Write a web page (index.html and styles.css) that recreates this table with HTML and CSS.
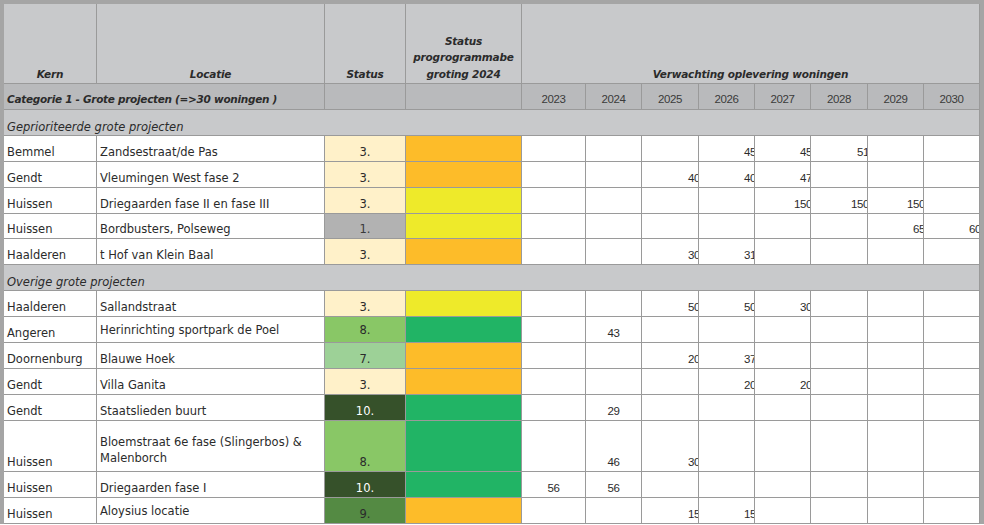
FILE: index.html
```html
<!DOCTYPE html>
<html lang="nl">
<head>
<meta charset="utf-8">
<title>Woningbouwprojecten</title>
<link rel="stylesheet" href="styles.css">
</head>
<body>
<div class="frame">
  <div class="sheet">
    <div class="row head">
      <div class="c hd">Kern</div>
      <div class="c hd">Locatie</div>
      <div class="c hd">Status</div>
      <div class="c hd">Status<br>progrogrammabe<br>groting 2024</div>
      <div class="c hd years-span">Verwachting oplevering woningen</div>
    </div>

    <div class="row cat">
      <div class="c cat-title">Categorie 1 - Grote projecten (=&gt;30 woningen )</div>
      <div class="c"></div>
      <div class="c"></div>
      <div class="c yr">2023</div>
      <div class="c yr">2024</div>
      <div class="c yr">2025</div>
      <div class="c yr">2026</div>
      <div class="c yr">2027</div>
      <div class="c yr">2028</div>
      <div class="c yr">2029</div>
      <div class="c yr">2030</div>
    </div>

    <div class="row group"><div class="c grp">Geprioriteerde grote projecten</div></div>

    <div class="row">
      <div class="c">Bemmel</div><div class="c">Zandsestraat/de Pas</div>
      <div class="c st s3">3.</div><div class="c pg orange"></div>
      <div class="c"></div><div class="c"></div><div class="c"></div>
      <div class="c n"><span>45</span></div><div class="c n"><span>45</span></div><div class="c n"><span>51</span></div>
      <div class="c"></div><div class="c"></div>
    </div>
    <div class="row">
      <div class="c">Gendt</div><div class="c">Vleumingen West fase 2</div>
      <div class="c st s3">3.</div><div class="c pg orange"></div>
      <div class="c"></div><div class="c"></div>
      <div class="c n"><span>40</span></div><div class="c n"><span>40</span></div><div class="c n"><span>47</span></div>
      <div class="c"></div><div class="c"></div><div class="c"></div>
    </div>
    <div class="row">
      <div class="c">Huissen</div><div class="c">Driegaarden fase II en fase III</div>
      <div class="c st s3">3.</div><div class="c pg yellow"></div>
      <div class="c"></div><div class="c"></div><div class="c"></div><div class="c"></div>
      <div class="c n"><span>150</span></div><div class="c n"><span>150</span></div><div class="c n"><span>150</span></div>
      <div class="c"></div>
    </div>
    <div class="row short">
      <div class="c">Huissen</div><div class="c">Bordbusters, Polseweg</div>
      <div class="c st s1">1.</div><div class="c pg yellow"></div>
      <div class="c"></div><div class="c"></div><div class="c"></div><div class="c"></div><div class="c"></div><div class="c"></div>
      <div class="c n"><span>65</span></div><div class="c n"><span>60</span></div>
    </div>
    <div class="row">
      <div class="c">Haalderen</div><div class="c">t Hof van Klein Baal</div>
      <div class="c st s3">3.</div><div class="c pg orange"></div>
      <div class="c"></div><div class="c"></div>
      <div class="c n"><span>30</span></div><div class="c n"><span>31</span></div>
      <div class="c"></div><div class="c"></div><div class="c"></div><div class="c"></div>
    </div>

    <div class="row group"><div class="c grp">Overige grote projecten</div></div>

    <div class="row">
      <div class="c">Haalderen</div><div class="c">Sallandstraat</div>
      <div class="c st s3">3.</div><div class="c pg yellow"></div>
      <div class="c"></div><div class="c"></div>
      <div class="c n"><span>50</span></div><div class="c n"><span>50</span></div><div class="c n"><span>30</span></div>
      <div class="c"></div><div class="c"></div><div class="c"></div>
    </div>
    <div class="row">
      <div class="c">Angeren</div><div class="c mid">Herinrichting sportpark de Poel</div>
      <div class="c st s8 mid">8.</div><div class="c pg green"></div>
      <div class="c"></div><div class="c num ctr">43</div>
      <div class="c"></div><div class="c"></div><div class="c"></div><div class="c"></div><div class="c"></div><div class="c"></div>
    </div>
    <div class="row">
      <div class="c">Doornenburg</div><div class="c">Blauwe Hoek</div>
      <div class="c st s7">7.</div><div class="c pg orange"></div>
      <div class="c"></div><div class="c"></div>
      <div class="c n"><span>20</span></div><div class="c n"><span>37</span></div>
      <div class="c"></div><div class="c"></div><div class="c"></div><div class="c"></div>
    </div>
    <div class="row">
      <div class="c">Gendt</div><div class="c">Villa Ganita</div>
      <div class="c st s3">3.</div><div class="c pg orange"></div>
      <div class="c"></div><div class="c"></div><div class="c"></div>
      <div class="c n"><span>20</span></div><div class="c n"><span>20</span></div>
      <div class="c"></div><div class="c"></div><div class="c"></div>
    </div>
    <div class="row">
      <div class="c">Gendt</div><div class="c">Staatslieden buurt</div>
      <div class="c st s10">10.</div><div class="c pg green"></div>
      <div class="c"></div><div class="c num ctr">29</div>
      <div class="c"></div><div class="c"></div><div class="c"></div><div class="c"></div><div class="c"></div><div class="c"></div>
    </div>
    <div class="row tall">
      <div class="c">Huissen</div><div class="c mid wrap">Bloemstraat 6e fase (Slingerbos) &amp;<br>Malenborch</div>
      <div class="c st s8">8.</div><div class="c pg green"></div>
      <div class="c"></div><div class="c num ctr">46</div>
      <div class="c n"><span>30</span></div>
      <div class="c"></div><div class="c"></div><div class="c"></div><div class="c"></div><div class="c"></div>
    </div>
    <div class="row">
      <div class="c">Huissen</div><div class="c">Driegaarden fase I</div>
      <div class="c st s10">10.</div><div class="c pg green"></div>
      <div class="c num ctr">56</div><div class="c num ctr">56</div>
      <div class="c"></div><div class="c"></div><div class="c"></div><div class="c"></div><div class="c"></div><div class="c"></div>
    </div>
    <div class="row">
      <div class="c">Huissen</div><div class="c mid">Aloysius locatie</div>
      <div class="c st s9">9.</div><div class="c pg orange"></div>
      <div class="c"></div><div class="c"></div>
      <div class="c n"><span>15</span></div><div class="c n"><span>15</span></div>
      <div class="c"></div><div class="c"></div><div class="c"></div><div class="c"></div>
    </div>
  </div>
</div>
</body>
</html>
```

FILE: styles.css
```css
html, body {
  margin: 0;
  padding: 0;
  background: #ffffff;
}

body {
  width: 984px;
  height: 525px;
  overflow: hidden;
  font-family: "DejaVu Sans", "Liberation Sans", sans-serif;
  font-size: 11.5px;
  color: #2b2b2b;
}

.frame {
  border-left: 4px solid #a5a5a5;
  border-top: 4px solid #a5a5a5;
  border-right: 4px solid #a5a5a5;
  width: 976px;
}

.sheet {
  display: flex;
  flex-direction: column;
  gap: 1px;
  background: #9a9a9a;
  padding: 0 1px 1px 0;
}

.row {
  display: grid;
  grid-template-columns: 92px 227px 80px 115px 63px 55px 56px 55px 55px 56px 55px 55px;
  column-gap: 1px;
  height: 25px;
}

.row.short { height: 24px; }
.row.tall { height: 50px; }
.row.head { height: 79px; }

.c {
  display: flex;
  align-items: flex-end;
  padding: 0 3px 1px;
  background: #ffffff;
  overflow: hidden;
  white-space: nowrap;
  line-height: 15px;
  min-width: 0;
}

.c.mid { align-items: center; padding-bottom: 0; padding-top: 1px; }
.c.wrap { white-space: normal; line-height: 16px; padding-top: 8px; }

.head .c {
  background: #c8c9cb;
  justify-content: center;
  text-align: center;
  font-weight: bold;
  font-style: italic;
  font-size: 10.5px;
  letter-spacing: -0.2px;
  line-height: 16.5px;
  padding-bottom: 1px;
  white-space: normal;
}
.head .years-span { grid-column: 5 / 13; }

.cat .c {
  background: #b9babc;
}
.cat .cat-title {
  grid-column: 1 / 3;
  font-weight: bold;
  font-style: italic;
  font-size: 10.5px;
  letter-spacing: -0.3px;
  padding-bottom: 2px;
}
.cat .yr {
  justify-content: center;
  color: #3a3a3a;
  font-family: "Liberation Sans", sans-serif;
  font-size: 11.5px;
  letter-spacing: -0.4px;
  padding-bottom: 2px;
}

.group .grp {
  grid-column: 1 / 13;
  background: #c8c9cb;
  font-style: italic;
  padding-bottom: 0;
}

.st { justify-content: center; }
.s1 { background: #b2b2b2; color: #3a3a3a; }
.s3 { background: #fff1c9; }
.s7 { background: #9dd197; }
.s8 { background: #89c766; }
.s9 { background: #548a43; }
.s10 { background: #36512a; color: #ffffff; }

.pg.orange { background: #fdbc29; }
.pg.yellow { background: #eeea2a; }
.pg.green { background: #21b465; }

.n, .num {
  font-family: "Liberation Sans", sans-serif;
  font-size: 11.5px;
  letter-spacing: -0.4px;
}
.n { justify-content: flex-end; padding-right: 0; }
.n span { margin-right: -2px; }
.ctr { justify-content: center; }
```
